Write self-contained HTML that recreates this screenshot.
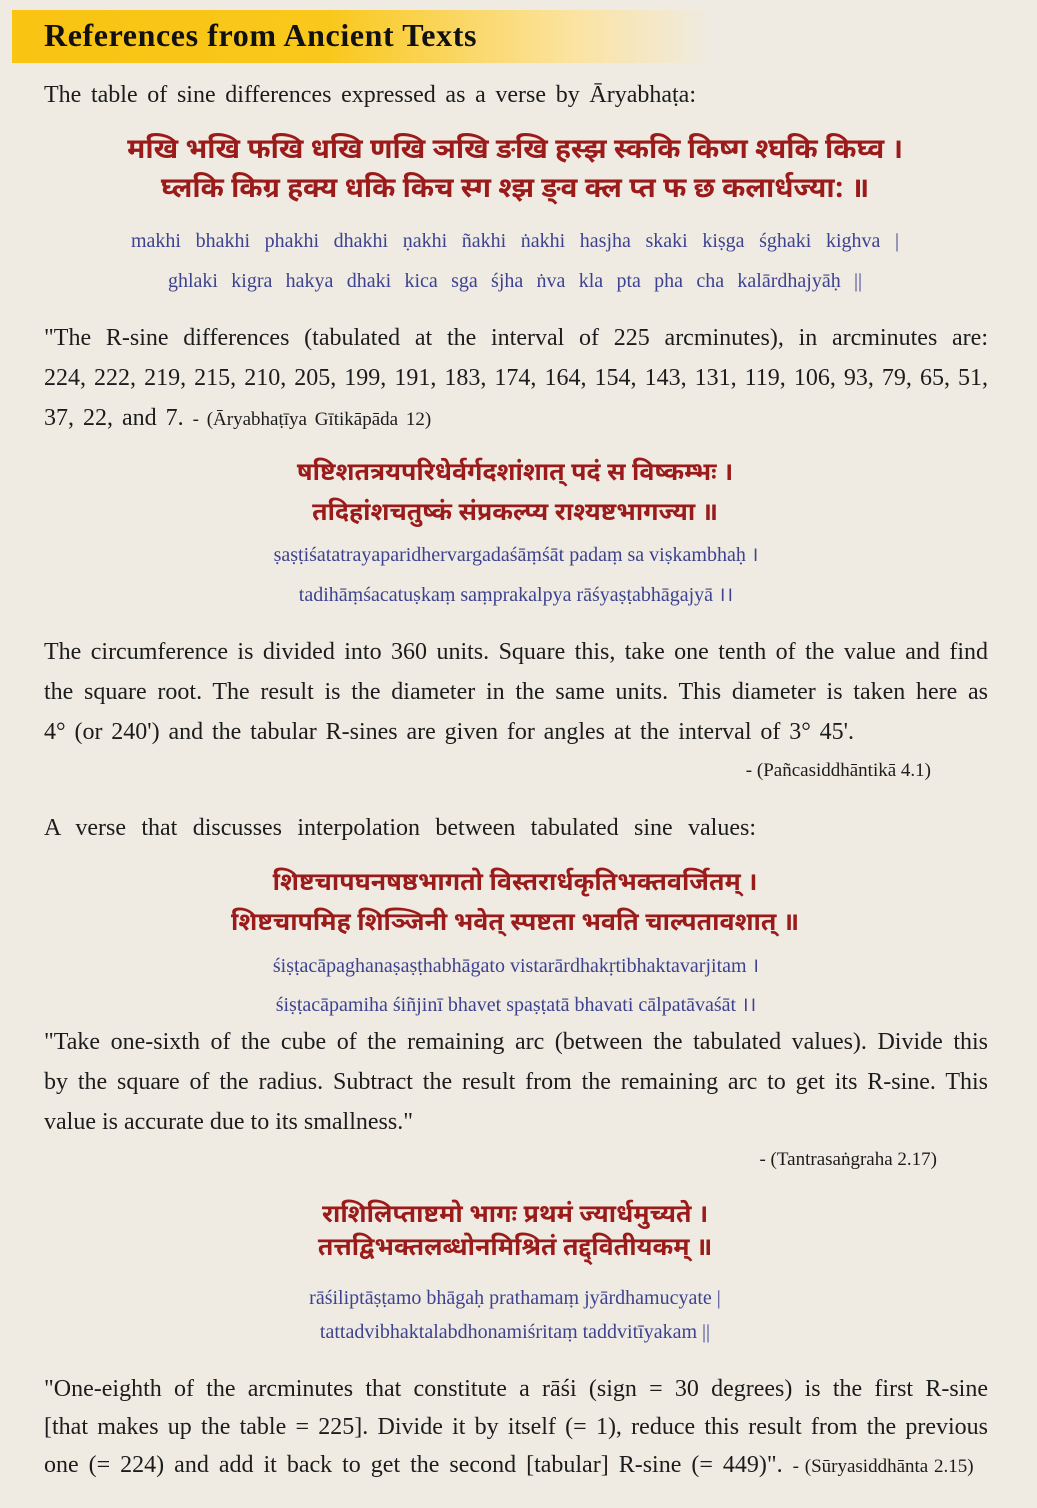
<!DOCTYPE html>
<html><head><meta charset="utf-8"><style>
html,body{margin:0;padding:0}
body{width:1037px;height:1508px;background:#efebe2;position:relative;overflow:hidden;font-family:"Liberation Serif",serif;color:#1c1c1c}
.hdr{position:absolute;left:12px;top:10px;width:700px;height:53px;background:linear-gradient(90deg,#f9c412 0%,#f9c81c 45%,#fbe3a0 80%,rgba(239,235,226,0) 100%)}
.ht{position:absolute;left:44px;top:14px;font-weight:bold;font-size:32px;line-height:42px;color:#111;letter-spacing:0.6px}
.l{position:absolute;line-height:40px;height:40px;overflow:hidden;text-align:justify;text-align-last:justify;font-size:24px}
.c{text-align:center;text-align-last:center}
.dv{color:#9b1b1b;font-family:"Noto Sans Devanagari","Lohit Devanagari","Noto Serif Devanagari","Liberation Serif",serif;font-size:25px;font-weight:bold}
.tr{color:#3d4290;font-size:20px}
.cit{font-size:19px}
</style></head><body>
<div class="hdr"></div>
<div class="ht">References from Ancient Texts</div>

<div class="l" style="left:44px;top:75px;width:652px">The table of sine differences expressed as a verse by Āryabhaṭa:</div>

<div class="l dv c" style="left:60px;top:132px;width:910px;font-size:28px">मखि भखि फखि धखि णखि ञखि ङखि हस्झ स्ककि किष्ग श्घकि किघ्व ।</div>
<div class="l dv c" style="left:60px;top:171px;width:910px;font-size:28px">घ्लकि किग्र हक्य धकि किच स्ग श्झ ङ्व क्ल प्त फ छ कलार्धज्या: ॥</div>
<div class="l tr" style="left:131px;top:221px;width:768px">makhi bhakhi phakhi dhakhi ṇakhi ñakhi ṅakhi hasjha skaki kiṣga śghaki kighva |</div>
<div class="l tr" style="left:168px;top:261px;width:694px">ghlaki kigra hakya dhaki kica sga śjha ṅva kla pta pha cha kalārdhajyāḥ ||</div>

<div class="l" style="left:44px;top:318px;width:944px">"The R-sine differences (tabulated at the interval of 225 arcminutes), in arcminutes are:</div>
<div class="l" style="left:44px;top:358px;width:944px">224, 222, 219, 215, 210, 205, 199, 191, 183, 174, 164, 154, 143, 131, 119, 106, 93, 79, 65, 51,</div>
<div class="l" style="left:44px;top:398px;width:420px;text-align:left;text-align-last:left;word-spacing:3px">37, 22, and 7. <span class="cit">- (Āryabhaṭīya Gītikāpāda 12)</span></div>

<div class="l dv c" style="left:200px;top:455px;width:630px">षष्टिशतत्रयपरिधेर्वर्गदशांशात् पदं स विष्कम्भः ।</div>
<div class="l dv c" style="left:200px;top:495px;width:630px">तदिहांशचतुष्कं संप्रकल्प्य राश्यष्टभागज्या ॥</div>
<div class="l tr c" style="left:200px;top:535px;width:632px">ṣaṣṭiśatatrayaparidhervargadaśāṃśāt padaṃ sa viṣkambhaḥ ।</div>
<div class="l tr c" style="left:200px;top:575px;width:632px">tadihāṃśacatuṣkaṃ saṃprakalpya rāśyaṣṭabhāgajyā ।।</div>

<div class="l" style="left:44px;top:632px;width:944px">The circumference is divided into 360 units. Square this, take one tenth of the value and find</div>
<div class="l" style="left:44px;top:672px;width:944px">the square root. The result is the diameter in the same units. This diameter is taken here as</div>
<div class="l" style="left:44px;top:712px;width:810px">4° (or 240') and the tabular R-sines are given for angles at the interval of 3° 45'.</div>
<div class="l cit" style="left:700px;top:751px;width:231px;text-align:right;text-align-last:right">- (Pañcasiddhāntikā 4.1)</div>

<div class="l" style="left:44px;top:808px;width:712px">A verse that discusses interpolation between tabulated sine values:</div>

<div class="l dv c" style="left:180px;top:865px;width:670px">शिष्टचापघनषष्ठभागतो विस्तरार्धकृतिभक्तवर्जितम् ।</div>
<div class="l dv c" style="left:180px;top:905px;width:670px">शिष्टचापमिह शिञ्जिनी भवेत् स्पष्टता भवति चाल्पतावशात् ॥</div>
<div class="l tr c" style="left:200px;top:946px;width:632px">śiṣṭacāpaghanaṣaṣṭhabhāgato vistarārdhakṛtibhaktavarjitam ।</div>
<div class="l tr c" style="left:200px;top:985px;width:632px">śiṣṭacāpamiha śiñjinī bhavet spaṣṭatā bhavati cālpatāvaśāt ।।</div>

<div class="l" style="left:44px;top:1022px;width:944px">"Take one-sixth of the cube of the remaining arc (between the tabulated values). Divide this</div>
<div class="l" style="left:44px;top:1062px;width:944px">by the square of the radius. Subtract the result from the remaining arc to get its R-sine. This</div>
<div class="l" style="left:44px;top:1102px;width:400px;text-align:left;text-align-last:left">value is accurate due to its smallness."</div>
<div class="l cit" style="left:700px;top:1140px;width:237px;text-align:right;text-align-last:right">- (Tantrasaṅgraha 2.17)</div>

<div class="l dv c" style="left:250px;top:1197px;width:530px">राशिलिप्ताष्टमो भागः प्रथमं ज्यार्धमुच्यते ।</div>
<div class="l dv c" style="left:250px;top:1230px;width:530px">तत्तद्विभक्तलब्धोनमिश्रितं तद्द्वितीयकम् ॥</div>
<div class="l tr c" style="left:200px;top:1278px;width:630px">rāśiliptāṣṭamo bhāgaḥ prathamaṃ jyārdhamucyate |</div>
<div class="l tr c" style="left:200px;top:1312px;width:630px">tattadvibhaktalabdhonamiśritaṃ taddvitīyakam ||</div>

<div class="l" style="left:44px;top:1369px;width:944px">"One-eighth of the arcminutes that constitute a rāśi (sign = 30 degrees) is the first R-sine</div>
<div class="l" style="left:44px;top:1407px;width:944px">[that makes up the table = 225]. Divide it by itself (= 1), reduce this result from the previous</div>
<div class="l" style="left:44px;top:1445px;width:940px;text-align:left;text-align-last:left;word-spacing:4px">one (= 224) and add it back to get the second [tabular] R-sine (= 449)". <span class="cit" style="word-spacing:1px">- (Sūryasiddhānta 2.15)</span></div>
</body></html>
